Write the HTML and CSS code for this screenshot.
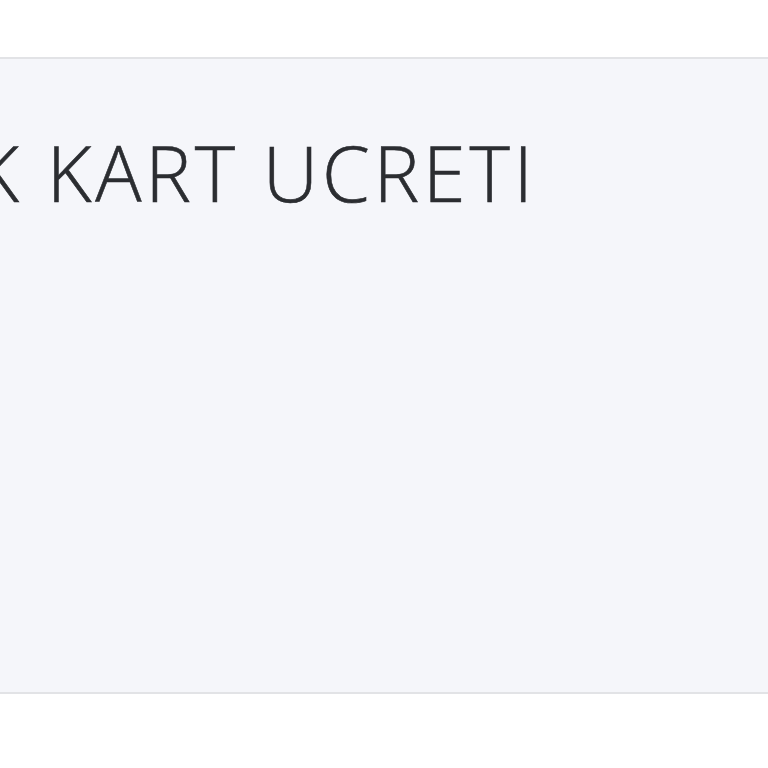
FILE: index.html
```html
<!DOCTYPE html>
<html lang="tr">
<head>
  <meta charset="UTF-8" />
  <title>Kart Ucreti</title>
  <link rel="stylesheet" href="styles.css">
</head>
<body>
  <div class="top"></div>
  <div class="panel">
    <h1 class="title">EK KART UCRETI</h1>
  </div>
  <div class="bottom"></div>
</body>
</html>
```
FILE: styles.css
```css
body {
  margin: 0;
  background: #fff;
  font-family: "Open Sans", "DejaVu Sans", sans-serif;
  overflow: hidden;
}
.top {
  height: 57px;
}
.panel {
  height: 633px;
  background: #f5f6fa;
  border-top: 2px solid #e2e3e6;
  border-bottom: 2px solid #e2e3e6;
  overflow: hidden;
}
.title {
  margin: 75px 0 0 -72px;
  font-size: 77px;
  font-weight: 300;
  color: #2b2d31;
  line-height: 1;
  letter-spacing: 3.8px;
  -webkit-text-stroke: 0.6px #2b2d31;
  white-space: nowrap;
}
```
